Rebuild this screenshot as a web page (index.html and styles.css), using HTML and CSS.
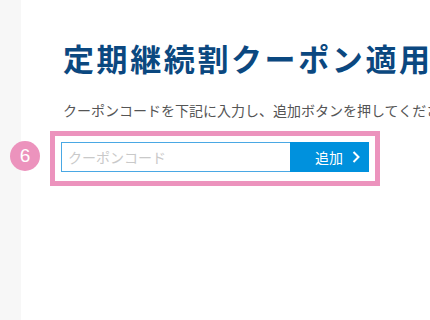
FILE: index.html
```html
<!DOCTYPE html>
<html lang="ja">
<head>
<meta charset="utf-8">
<link rel="stylesheet" href="styles.css">
</head>
<body>
<div class="page">
  <aside class="side"></aside>
  <main class="main">
    <h1 class="title">定期継続割クーポン適用</h1>
    <p class="desc">クーポンコードを下記に入力し、追加ボタンを押してください。</p>
    <div class="highlight">
      <span class="badge">6</span>
      <form class="coupon">
        <input class="coupon-input" type="text" placeholder="クーポンコード">
        <button class="coupon-btn" type="button">
          <span>追加</span>
          <svg class="chev" width="8" height="12" viewBox="0 0 8 12"><path d="M1.5 1 L6.5 6 L1.5 11" fill="none" stroke="#fff" stroke-width="2"/></svg>
        </button>
      </form>
    </div>
  </main>
</div>
</body>
</html>
```
FILE: styles.css
```css
html, body {
  margin: 0;
  padding: 0;
  background: #fff;
}
body {
  font-family: "Noto Sans CJK JP", "Noto Sans", sans-serif;
  overflow: hidden;
}
.page {
  display: flex;
  width: 430px;
  height: 320px;
  overflow: hidden;
}
.side {
  width: 21px;
  flex: none;
  background: #f7f7f7;
}
.main {
  flex: none;
  padding-left: 42px;
  white-space: nowrap;
}
.title {
  margin: 36px 0 0;
  font-size: 31px;
  line-height: 44px;
  font-weight: 700;
  letter-spacing: 2.6px;
  color: #0b4880;
}
.desc {
  margin: 20px 0 0;
  font-size: 14px;
  line-height: 20px;
  color: #555;
}
.highlight {
  position: relative;
  margin: 11px 0 0 -13px;
  width: 308px;
  border: 5px solid #ec93bd;
  padding: 6px 6px 9px 6px;
  box-sizing: content-box;
}
.badge {
  position: absolute;
  left: -45px;
  top: 5px;
  width: 30px;
  height: 30px;
  border-radius: 50%;
  background: #ec93bd;
  color: #fff;
  font-family: "Liberation Sans", Arial, sans-serif;
  font-size: 19px;
  line-height: 30px;
  text-align: center;
}
.coupon {
  display: flex;
  margin: 0;
  width: 308px;
  height: 30px;
}
.coupon-input {
  flex: 1;
  min-width: 0;
  margin: 0;
  box-sizing: border-box;
  height: 30px;
  border: 1px solid #4aa8e4;
  border-right: none;
  padding: 0 6px;
  font-family: "Noto Sans CJK JP", sans-serif;
  font-size: 14px;
  color: #333;
  outline: none;
}
.coupon-input::placeholder {
  color: #c9c9c9;
}
.coupon-btn {
  width: 79px;
  height: 30px;
  flex: none;
  margin: 0;
  border: none;
  background: #0091dd;
  color: #fff;
  font-family: "Noto Sans CJK JP", sans-serif;
  font-size: 14px;
  display: flex;
  align-items: center;
  justify-content: flex-end;
  gap: 9px;
  padding: 0 9px 0 0;
}
.chev {
  display: block;
}
```
